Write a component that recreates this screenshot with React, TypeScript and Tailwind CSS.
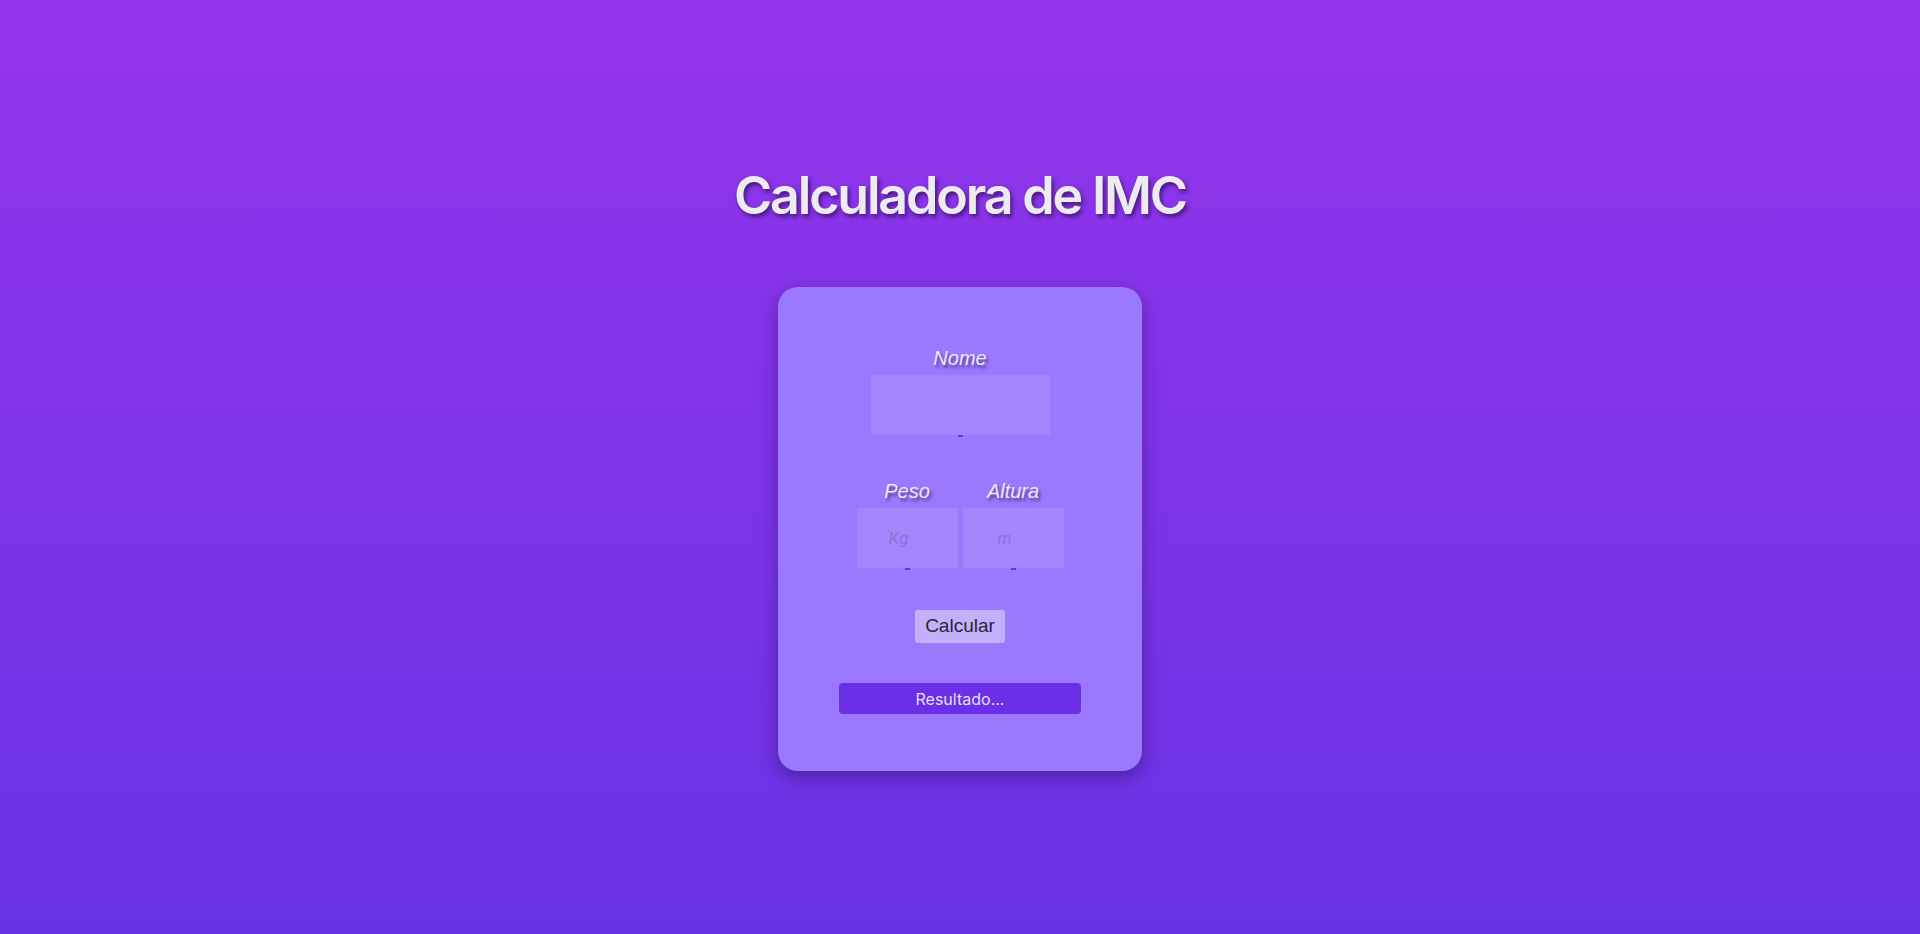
export default function App() {
  return (
    <div className="flex min-h-screen flex-col items-center bg-gradient-to-b from-[#9434ec] to-[#6832e4] pt-[170px] pb-10">
      <h1 className="font-['Inter',sans-serif] text-[52px] leading-none font-semibold tracking-[-2.2px] text-[#eeeaf2] [text-shadow:2px_3px_4px_rgba(30,10,60,0.65)]">
        Calculadora de IMC
      </h1>

      <div className="mt-[65px] flex h-[484px] w-[364px] flex-col items-center rounded-[20px] bg-[#9a79fe] pt-[61px] shadow-[0_6px_18px_rgba(40,10,90,0.45)]">
        <Field label="Nome" width="w-[179px]" placeholder="" />

        <div className="mt-[44px] flex gap-[5px]">
          <Field label="Peso" width="w-[101px]" placeholder="Kg" />
          <Field label="Altura" width="w-[101px]" placeholder="m" />
        </div>

        <button className="mt-[40px] h-[33px] rounded-[3px] bg-[#c3b0fa] px-[10px] font-['Liberation_Sans',Arial,sans-serif] text-[19px] text-[#28243a]">
          Calcular
        </button>

        <div className="mt-[40px] flex h-[31px] w-[242px] items-center justify-center rounded-[4px] bg-[#6a2fe6] font-['Inter',sans-serif] text-[16px] text-[#e6defb]">
          Resultado...
        </div>
      </div>
    </div>
  );
}

function Field({ label, width, placeholder }: { label: string; width: string; placeholder: string }) {
  return (
    <div className="flex flex-col items-center">
      <label className="font-['Liberation_Sans',Arial,sans-serif] text-[20px] leading-none italic text-[#ece6f8] [text-shadow:2px_3px_3px_rgba(40,20,80,0.6)]">
        {label}
      </label>
      <input
        type="text"
        placeholder={placeholder}
        className={`mt-[7px] h-[60px] ${width} bg-[#a386fe] pr-[17px] text-center font-['Inter',sans-serif] text-[16px] italic outline-none placeholder:text-[#8a72d2]`}
      />
      <div className="h-[2px] w-[5px] bg-[#6a2fe6]" />
    </div>
  );
}
